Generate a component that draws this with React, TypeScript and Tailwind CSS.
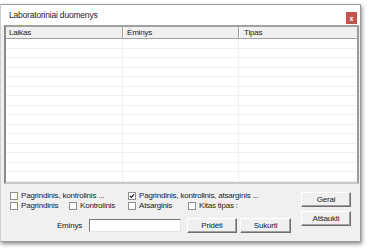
import React from "react";

const font = { fontFamily: '"Liberation Sans", Arial, sans-serif' };

function Check({ checked = false }: { checked?: boolean }) {
  return (
    <span className="inline-flex w-[8px] h-[8px] border border-[#8f8f8f] bg-white items-center justify-center shrink-0">
      {checked && (
        <svg width="6" height="6" viewBox="0 0 6 6">
          <path d="M0.8 2.8 L2.3 4.4 L5.2 1.2" stroke="#222" strokeWidth="1.1" fill="none" />
        </svg>
      )}
    </span>
  );
}

function Opt({ label, checked, w }: { label: string; checked?: boolean; w: string }) {
  return (
    <div className={`flex items-center gap-[3px] ${w}`}>
      <Check checked={checked} />
      <span className="text-[8px] tracking-[-0.2px] leading-none text-[#222] whitespace-nowrap">{label}</span>
    </div>
  );
}

function Btn({ label, w }: { label: string; w: string }) {
  return (
    <div
      className={`${w} h-[15px] flex items-center justify-center text-[8px] tracking-[-0.2px] leading-none text-[#222] bg-[#f0f0f0] border border-t-white border-l-white border-b-[#6e6e6e] border-r-[#6e6e6e] shadow-[inset_-1px_-1px_0_#a0a0a0]`}
    >
      {label}
    </div>
  );
}

export default function App() {
  const rows = Array.from({ length: 15 });
  return (
    <div className="w-[370px] h-[250px] bg-white pt-[4px]" style={font}>
      <div className="w-[361px] h-[238px] border border-[#9a9a9a] border-l-[#d0d0d0] bg-[#f0f0f0] flex flex-col shadow-[1px_2px_4px_rgba(0,0,0,0.45)]">
        {/* title bar */}
        <div className="h-[20px] bg-white flex items-center justify-between pl-[8px] pr-[3px] shrink-0">
          <span className="text-[8.5px] tracking-[-0.2px] leading-none text-[#222]">Laboratoriniai duomenys</span>
          <div className="w-[11px] h-[12px] bg-[#c75050] flex items-center justify-center mt-[6px]">
            <span className="text-white text-[7px] font-bold leading-none">x</span>
          </div>
        </div>
        {/* list */}
        <div className="ml-[3px] mr-[1px] h-[159px] border-2 border-t-[#a0a0a0] border-l-[#8a8a8a] border-r-[#9c9c9c] border-b-[#c8c8c8] bg-white flex flex-col shrink-0 overflow-hidden">
          <div className="h-[12px] bg-[#f0f0f0] flex border-b border-[#a0a0a0] shrink-0">
            <div className="w-[117px] pl-[3px] border-r border-[#a0a0a0] text-[8px] tracking-[-0.2px] leading-[11px] text-[#222] shadow-[1px_0_0_white]">Laikas</div>
            <div className="w-[116px] pl-[4px] border-r border-[#a0a0a0] text-[8px] tracking-[-0.2px] leading-[11px] text-[#222] shadow-[1px_0_0_white]">Ėminys</div>
            <div className="flex-1 pl-[5px] text-[8px] tracking-[-0.2px] leading-[11px] text-[#222]">Tipas</div>
          </div>
          <div className="flex-1 flex flex-col">
            {rows.map((_, i) => (
              <div key={i} className="h-[9.5px] shrink-0 flex border-b border-[#f0f0f0]">
                <div className="w-[117px] border-r border-[#f0f0f0]" />
                <div className="w-[116px] border-r border-[#f0f0f0]" />
                <div className="flex-1" />
              </div>
            ))}
          </div>
        </div>
        {/* bottom */}
        <div className="flex-1 flex">
          <div className="flex flex-col pl-[9px] pt-[7px]">
            <div className="flex h-[9px] items-center">
              <Opt label="Pagrindinis, kontrolinis ..." w="w-[118px]" />
              <Opt label="Pagrindinis, kontrolinis, atsarginis ..." checked w="w-[150px]" />
            </div>
            <div className="flex h-[9px] items-center mt-[1px]">
              <Opt label="Pagrindinis" w="w-[59px]" />
              <Opt label="Kontrolinis" w="w-[59px]" />
              <Opt label="Atsarginis" w="w-[60px]" />
              <Opt label="Kitas tipas :" w="w-[80px]" />
            </div>
            <div className="flex items-center mt-[8px]">
              <span className="w-[79px] text-right pr-[7px] text-[8px] tracking-[-0.2px] leading-none text-[#222]">Ėminys</span>
              <div className="w-[92px] h-[13px] bg-white border border-t-[#7a7a7a] border-l-[#7a7a7a] border-b-[#e3e3e3] border-r-[#e3e3e3]" />
              <div className="ml-[6px]">
                <Btn label="Pridėti" w="w-[50px]" />
              </div>
              <div className="ml-[3px]">
                <Btn label="Sukurti" w="w-[51px]" />
              </div>
            </div>
          </div>
          <div className="flex flex-col pl-[10px] pt-[8px] gap-[4px]">
            <Btn label="Gerai" w="w-[50px]" />
            <Btn label="Atšaukti" w="w-[50px]" />
          </div>
        </div>
      </div>
    </div>
  );
}
